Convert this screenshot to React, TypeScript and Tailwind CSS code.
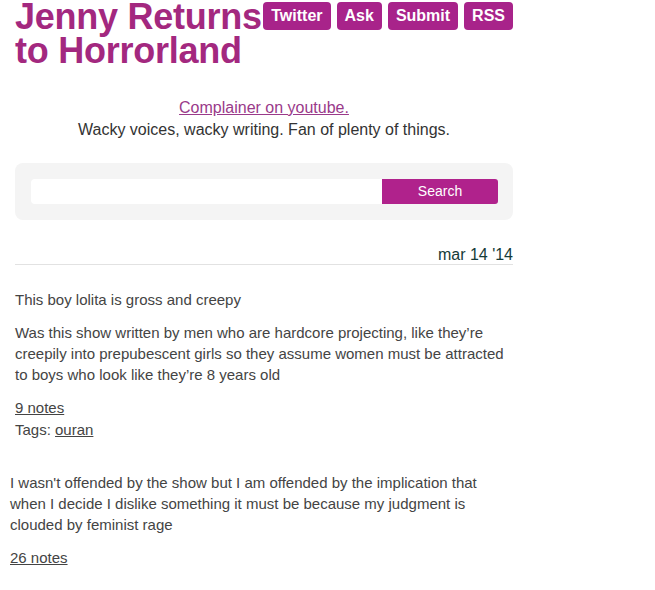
import React from 'react';

const navLinks = ['Twitter', 'Ask', 'Submit', 'RSS'];

const App: React.FC = () => {
  return (
    <div className="min-h-[590px] bg-white font-['Liberation_Sans',Arial,sans-serif] text-[#444]">
      <div className="ml-[15px] w-[498px]">
        {/* header */}
        <div className="flex items-start justify-between">
          <h1 className="shrink-0 whitespace-nowrap text-[36px] font-bold leading-[34px] tracking-[-0.25px] text-[#a3287f]">
            Jenny Returns
            <br />
            to Horrorland
          </h1>
          <nav className="mt-[2px] flex gap-[6px]">
            {navLinks.map((label) => (
              <a
                key={label}
                href="#"
                className="flex h-[28px] items-center rounded-[4px] bg-[#a8238a] px-[8px] text-[16px] font-bold text-white"
              >
                {label}
              </a>
            ))}
          </nav>
        </div>

        {/* description */}
        <div className="mt-[29px] text-center text-[16px] leading-[22px]">
          <a href="#" className="text-[#9a3a8a] underline">
            Complainer on youtube.
          </a>
          <p className="text-[#333]">Wacky voices, wacky writing. Fan of plenty of things.</p>
        </div>

        {/* search */}
        <form className="mt-[22px] flex h-[57px] items-center rounded-[8px] bg-[#f4f4f4] pl-[16px] pr-[15px]">
          <input className="h-[25px] flex-1 rounded-l-[4px] bg-white outline-none" />
          <button
            type="button"
            className="h-[25px] w-[116px] rounded-r-[3px] bg-[#b0228c] text-[14px] text-white"
          >
            Search
          </button>
        </form>

        {/* date */}
        <div className="mt-[26px] border-b border-[#e2e2e2] text-right text-[16px] leading-[18px] text-[#163b38]">
          mar 14 '14
        </div>

        {/* post 1 */}
        <div className="mt-[24px] text-[15px] leading-[21px]">
          <p>This boy lolita is gross and creepy</p>
          <p className="mt-[12px]">
            Was this show written by men who are hardcore projecting, like they’re creepily into
            prepubescent girls so they assume women must be attracted to boys who look like
            they’re 8 years old
          </p>
          <div className="mt-[12px] leading-[22px]">
            <a href="#" className="underline">9 notes</a>
            <div>
              Tags: <a href="#" className="underline">ouran</a>
            </div>
          </div>
        </div>
      </div>

      {/* post 2 */}
      <div className="ml-[10px] mt-[31px] w-[490px] text-[15px] leading-[21px]">
        <p>
          I wasn't offended by the show but I am offended by the implication that when I decide
          I dislike something it must be because my judgment is clouded by feminist rage
        </p>
        <div className="mt-[12px]">
          <a href="#" className="underline">26 notes</a>
        </div>
      </div>
    </div>
  );
};

export default App;
